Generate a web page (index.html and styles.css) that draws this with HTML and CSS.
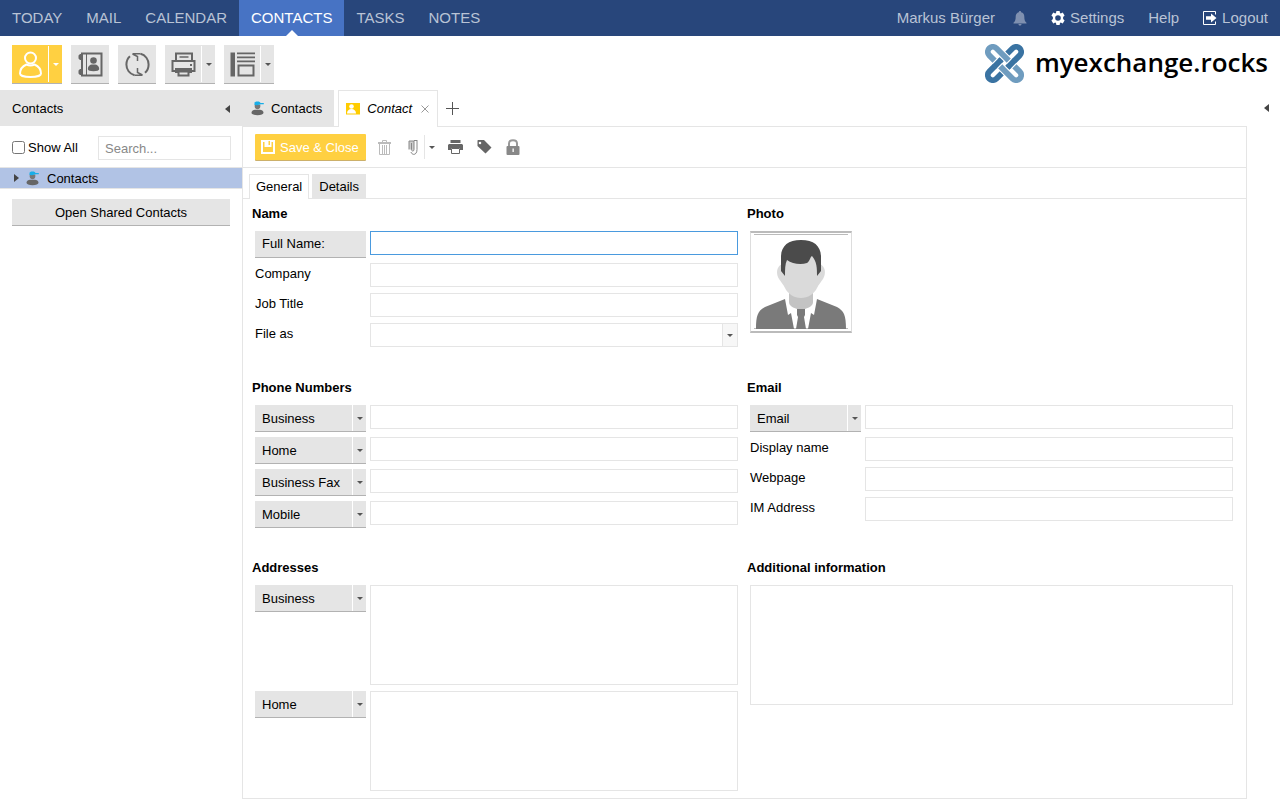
FILE: index.html
```html
<!DOCTYPE html>
<html lang="en">
<head>
  <meta charset="UTF-8" />
  <title>Contact - myexchange.rocks</title>
  <meta name="viewport" content="width=device-width, initial-scale=1.0"/>
  <link rel="stylesheet" href="styles.css">
</head>
<body>

  <header class="topbar">
    <nav class="main-nav">
      <a href="#today">TODAY</a>
      <a href="#mail">MAIL</a>
      <a href="#calendar">CALENDAR</a>
      <a href="#contacts" class="active">CONTACTS</a>
      <a href="#tasks">TASKS</a>
      <a href="#notes">NOTES</a>
    </nav>
    <nav class="user-nav">
      <span class="user-name">Markus Bürger</span>
      <a href="#reminders" class="bell" aria-label="Reminders">
        <svg width="14" height="15" viewBox="0 0 14 15"><path fill="#7f90b0" d="M7 0c.7 0 1.1.5 1.1 1.2C10.300 1.700 11.300 3.500 11.300 5.500c0 3.500.7 4.800 2.200 6.200v.8H.5v-.8C2 10.300 2.700 9 2.700 5.500c0-2 1-3.800 3.200-4.300C5.900.5 6.300 0 7 0zM5.500 13h3c0 1-.6 1.600-1.500 1.600S5.500 14 5.500 13z"/></svg>
      </a>
      <a href="#settings" class="with-icon">
        <svg width="14" height="14" viewBox="0 0 14 14"><path fill="#fff" fill-rule="evenodd" d="M5.400 0h3.200l.4 2 .8.400 1.900-.8 1.900 2.900-1.500 1.400v2.200l1.500 1.400-1.900 2.900-1.900-.8-.8.400-.4 2H5.400l-.4-2-.8-.4-1.900.8L.4 9.500l1.500-1.400V5.900L.4 4.500l1.900-2.900 1.900.8.8-.4zM7 4.200a2.800 2.800 0 1 0 0 5.600 2.800 2.800 0 0 0 0-5.600z"/></svg>
        Settings
      </a>
      <a href="#help">Help</a>
      <a href="#logout" class="with-icon">
        <svg width="14" height="14" viewBox="0 0 14 14"><path fill="none" stroke="#fff" d="M12.500 3.500v-3H.5v13h12v-3"/><path fill="#fff" d="M3 5.200h5V2.500L13.500 7 8 11.500V8.800H3z"/></svg>
        Logout
      </a>
    </nav>
  </header>

  <div class="toolbar">
    <button class="tool split primary" aria-label="New contact">
      <span class="tool-icon"><svg width="25" height="27" viewBox="0 0 25 27" fill="none" stroke="#fff" stroke-width="2"><circle cx="12.500" cy="7" r="5.500"/><path d="M8.500 13.500C4 15.500 2 19.500 2 22.500c0 2 4 3.500 10.500 3.500S23 24.500 23 22.500c0-3-2-7-6.500-9-2.500 1.300-5.500 1.300-8 0z"/></svg></span>
      <span class="caret"></span>
    </button>
    <button class="tool" aria-label="Address book">
      <span class="tool-icon"><svg width="25" height="25" viewBox="0 0 25 25"><path fill="none" stroke="#666" stroke-width="2" d="M4 2.500V1.500h19.500v22H4v-1M4 8v9"/><path stroke="#666" d="M8.500 1v23"/><path fill="#666" d="M2 2h3v6H2L.5 6.500v-3zM2 17h3v6H2L.5 21.500v-3z"/><circle cx="15.500" cy="8.500" r="3.300" fill="#666"/><path fill="#666" d="M9.800 17c0-3 2.400-4.500 4-4.500h3.400c1.600 0 4 1.500 4 4.500 0 1.600-2.500 2.200-5.700 2.200S9.800 18.600 9.800 17z"/></svg></span>
    </button>
    <button class="tool" aria-label="Refresh">
      <span class="tool-icon"><svg width="25" height="25" viewBox="0 0 25 25" fill="none" stroke="#666" stroke-width="2"><path d="M9.500 23.200C4.500 22 1.400 17.500 1.400 12.500c0-3.500 1.300-6.300 3.600-8.300"/><path d="M15.500 1.800c5 1.200 8.100 5.700 8.100 10.700 0 3.500-1.300 6.300-3.600 8.300"/><path stroke-width="1.500" d="M15.500 1.800H7.500M7.500 2l5 2.500V9M9.500 23.200h8M17.500 23l-5-2.500V16"/></svg></span>
    </button>
    <button class="tool split" aria-label="Print">
      <span class="tool-icon"><svg width="25" height="25" viewBox="0 0 25 25"><g fill="none" stroke="#666" stroke-width="2"><path d="M5 9V1.500h16V9M4 19H1.500V9h22v10H21"/></g><path stroke="#666" stroke-width="1.500" d="M8.500 5h9"/><path fill="#666" d="M4 16h17v5h-2.500v3.500h-12V21H4zM19 12h2v2h-2z"/><path fill="#e5e5e5" d="M8.500 20.500h8v2h-8z"/></svg></span>
      <span class="caret"></span>
    </button>
    <button class="tool split" aria-label="View">
      <span class="tool-icon"><svg width="25" height="25" viewBox="0 0 25 25"><path fill="#666" d="M.5.500h4.500v24H.5z"/><path stroke="#666" stroke-width="1.700" d="M7 1.400h18M7 5.400h18M7 9.400h18"/><path fill="none" stroke="#666" stroke-width="2" d="M8.500 13.500h15v10h-15z"/></svg></span>
      <span class="caret"></span>
    </button>

    <a href="#home" class="brand">
      <!-- two interlaced loops -->
      <svg width="39" height="39" viewBox="0 0 39 39" fill="none">
        <g transform="translate(19.500 19.500) rotate(45)" stroke-width="5.800">
          <rect x="-5" y="-21.500" width="10" height="43" rx="5" stroke="#3a73a2"/>
          <path stroke="#fff" stroke-width="8" d="M-9-5h8M1 5h8"/>
          <rect x="-21.500" y="-5" width="43" height="10" rx="5" stroke="#6f9cbf"/>
          <path stroke="#fff" stroke-width="8" d="M5-9v8M-5 1v8"/>
          <path stroke="#3a73a2" d="M5-9.500v9M-5 .5v9"/>
        </g>
      </svg>
      <span>myexchange.rocks</span>
    </a>
  </div>

  <div class="workspace">
    <aside class="sidebar">
      <div class="sidebar-head">
        <span>Contacts</span>
        <button class="collapse" aria-label="Collapse navigation"></button>
      </div>
      <div class="filter">
        <label><input type="checkbox"> <span>Show All</span></label>
        <input type="text" class="search" placeholder="Search..." aria-label="Search folders">
      </div>
      <a href="#folder" class="folder">
        <span class="expander"></span>
        <svg class="person" width="14" height="15" viewBox="0 0 14 15"><path fill="#666" d="M.5 11.800C.5 9.700 2.500 8.800 4 8.800h5c1.500 0 3.500.9 3.500 3 0 1.600-2.500 2.400-6 2.400s-6-.8-6-2.400z"/><path fill="#777" d="M3.700 3.500h5.600v2c0 1.800-1.300 2.700-2.800 2.700S3.700 7.300 3.700 5.500z"/><path fill="#18aee8" d="M3.500 4V2c0-1 1-1.600 3-1.600S9.300 1 9.500 2H12.800v1.300H9.500L6 4.200z"/></svg>
        <span>Contacts</span>
      </a>
      <button class="shared">Open Shared Contacts</button>
    </aside>

    <main class="content">
      <div class="tabs">
        <a href="#list" class="tab">
          <svg class="person" width="14" height="15" viewBox="0 0 14 15"><path fill="#666" d="M.5 11.800C.5 9.700 2.500 8.800 4 8.800h5c1.500 0 3.500.9 3.500 3 0 1.600-2.500 2.400-6 2.400s-6-.8-6-2.400z"/><path fill="#777" d="M3.700 3.500h5.600v2c0 1.800-1.300 2.700-2.800 2.700S3.700 7.300 3.700 5.500z"/><path fill="#18aee8" d="M3.500 4V2c0-1 1-1.600 3-1.600S9.300 1 9.500 2H12.800v1.300H9.500L6 4.200z"/></svg>
          Contacts
        </a>
        <div class="tab active">
          <svg width="14" height="12" viewBox="0 0 14 12"><path fill="#fc0" d="M0 0h14v11.500H0z"/><circle cx="5.500" cy="3.500" r="2.300" fill="#fff"/><path fill="#fff" d="M1 10.500c0-3 2-4.500 4.500-4.500S10 7.500 10 10.500z"/></svg>
          <em>Contact</em>
          <button class="close" aria-label="Close tab"><svg width="8" height="8" viewBox="0 0 8 8"><path stroke="#999" d="M.5.500l7 7M7.500.5l-7 7"/></svg></button>
        </div>
        <button class="add" aria-label="New tab"><svg width="13" height="13" viewBox="0 0 13 13"><path stroke="#555" d="M6.500 0v13M0 6.500h13"/></svg></button>
      </div>

      <form class="panel">
        <div class="actions">
          <button type="button" class="save">
            <svg width="14" height="14" viewBox="0 0 14 14"><path fill="none" stroke="#fff" stroke-width="2" d="M1 1h12v12H1z"/><path fill="#fff" d="M3.500 1h7v6h-7z"/><path fill="#ffd041" d="M7.500 1h1.500v4H7.500z"/></svg>
            <span>Save &amp; Close</span>
          </button>
          <button type="button" class="action trash" aria-label="Delete"><svg width="13" height="15" viewBox="0 0 13 15"><g fill="none" stroke="#bbb"><path stroke-width="2" d="M0 3h13"/><path d="M4.500 2V.5h4V2M1.500 4v10.500h10V4M4.500 5v9M6.500 5v9M8.500 5v9"/></g></svg></button>
          <button type="button" class="action" aria-label="Attach"><svg width="10" height="15" viewBox="0 0 10 15"><path fill="#ccc" d="M1 1h5v10L1 9z"/><path fill="none" stroke="#888" d="M3.500 3v6.500c0 2 2.500 2 2.500 0V1H1v8.500M9 1v8.500c0 6-5 6-6 2.500M6 .5h3.500"/></svg></button>
          <button type="button" class="action menu" aria-label="Attach menu"><span class="arrow"></span></button>
          <button type="button" class="action" aria-label="Print"><svg width="15" height="14" viewBox="0 0 15 14"><path fill="#666" d="M2.500 0h10v3h-10zM1 4h13l1 1v5h-3V8H3v2H0V5z"/><path fill="none" stroke="#666" d="M3.500 8.500h8v5h-8z"/></svg></button>
          <button type="button" class="action" aria-label="Categories"><svg width="15" height="14" viewBox="0 0 15 14"><path fill="#666" fill-rule="evenodd" d="M1 0h6l7.500 7.500-6 6L.5 6V.5zM3 1.700a1.300 1.300 0 1 0 0 2.600 1.300 1.300 0 0 0 0-2.600z"/></svg></button>
          <button type="button" class="action" aria-label="Private"><svg width="14" height="16" viewBox="0 0 14 16"><path fill="none" stroke="#999" stroke-width="2" d="M3 8V4.500C3 0 11 0 11 4.500V8"/><rect x=".5" y="7" width="13" height="9" rx="1" fill="#888"/><path fill="#fff" d="M6.500 9.500h1.300v3.500H6.500z"/></svg></button>
        </div>

        <div class="subtabs">
          <a href="#general" class="subtab active">General</a>
          <a href="#details" class="subtab">Details</a>
        </div>

        <div class="sections">
          <section>
            <h2>Name</h2>
            <div class="rows">
              <div class="row">
                <button type="button" class="name-button">Full Name:</button>
                <input type="text" class="focused" aria-label="Full Name">
              </div>
              <div class="row">
                <label for="company">Company</label>
                <input type="text" id="company">
              </div>
              <div class="row">
                <label for="jobTitle">Job Title</label>
                <input type="text" id="jobTitle">
              </div>
              <div class="row">
                <label for="fileAs">File as</label>
                <div class="combo"><select id="fileAs"><option></option></select><span class="arrow"></span></div>
              </div>
            </div>
          </section>

          <section>
            <h2>Photo</h2>
            <div class="rows">
              <button type="button" class="photo" aria-label="Contact photo">
                <svg width="94" height="96" viewBox="0 0 94 96">
                  <path stroke="#bbb" d="M0 .5h94M0 94.500h94"/>
                  <path fill="#c3c3c3" d="M35 54h24v14c0 4-5 6-8 7h-8c-3-1-8-3-8-7z"/>
                  <path fill="#dadada" d="M28 30c-6 3-6 10-3 15 2 3 4 5 6 9 3 6 9 10 16 10s13-4 16-10c2-4 4-6 6-9 3-5 3-12-3-15V20H28z"/>
                  <path fill="#4b4b4b" d="M27 37V23C27 12 34 6 47 6s20 6 20 17v14l-4 5c0-8 0-14-5-20-2 1-2 5-5 7-6 2-15 1-20-3-2 4-2 9-2 16z"/>
                  <path fill="#7a7a7a" d="M2 95c0-14 2-18 9-22l20-8 3 16 3-2 3 16zM92 95c0-14-2-18-9-22l-20-8-3 16-3-2-3 16zM43 75h8v6l-1 2 2 12H42l2-12-1-2z"/>
                </svg>
              </button>
            </div>
          </section>

          <section>
            <h2>Phone Numbers</h2>
            <div class="rows">
              <div class="row">
                <div class="picker"><select aria-label="Phone type 1"><option>Business</option></select><span class="arrow"></span></div>
                <input type="text" aria-label="Business phone">
              </div>
              <div class="row">
                <div class="picker"><select aria-label="Phone type 2"><option>Home</option></select><span class="arrow"></span></div>
                <input type="text" aria-label="Home phone">
              </div>
              <div class="row">
                <div class="picker"><select aria-label="Phone type 3"><option>Business Fax</option></select><span class="arrow"></span></div>
                <input type="text" aria-label="Business fax">
              </div>
              <div class="row">
                <div class="picker"><select aria-label="Phone type 4"><option>Mobile</option></select><span class="arrow"></span></div>
                <input type="text" aria-label="Mobile phone">
              </div>
            </div>
          </section>

          <section>
            <h2>Email</h2>
            <div class="rows">
              <div class="row">
                <div class="picker"><select aria-label="Email type"><option>Email</option></select><span class="arrow"></span></div>
                <input type="text" aria-label="Email">
              </div>
              <div class="row">
                <label for="displayName">Display name</label>
                <input type="text" id="displayName">
              </div>
              <div class="row">
                <label for="webpage">Webpage</label>
                <input type="text" id="webpage">
              </div>
              <div class="row">
                <label for="imAddress">IM Address</label>
                <input type="text" id="imAddress">
              </div>
            </div>
          </section>

          <section>
            <h2>Addresses</h2>
            <div class="rows">
              <div class="row">
                <div class="picker"><select aria-label="Address type 1"><option>Business</option></select><span class="arrow"></span></div>
                <textarea class="address" aria-label="Business address"></textarea>
              </div>
              <div class="row">
                <div class="picker"><select aria-label="Address type 2"><option>Home</option></select><span class="arrow"></span></div>
                <textarea class="address" aria-label="Home address"></textarea>
              </div>
            </div>
          </section>

          <section>
            <h2 id="infoTitle">Additional information</h2>
            <div class="rows">
              <textarea class="info" aria-labelledby="infoTitle"></textarea>
            </div>
          </section>
        </div>
      </form>
    </main>

    <div class="right-rail">
      <button class="collapse" aria-label="Show widgets"></button>
    </div>
  </div>

</body>
</html>
```

FILE: styles.css
```css
* {
  box-sizing: border-box;
}
body {
  margin: 0;
  background: #fff;
  color: #000;
  font-family: "Liberation Sans", Arial, sans-serif;
  font-size: 13px;
  line-height: 18px;
}
a {
  color: inherit;
  text-decoration: none;
}
button, input, select, textarea {
  font: inherit;
  color: inherit;
  margin: 0;
  padding: 0;
  border: 0;
  border-radius: 0;
  background: none;
}
button {
  cursor: pointer;
}
svg {
  display: block;
  flex-shrink: 0;
}

/* top bar */
.topbar {
  display: flex;
  justify-content: space-between;
  height: 36px;
  background: #28467b;
  color: #b9c3d5;
  font-size: 15px;
  line-height: 36px;
}
.main-nav {
  display: flex;
}
.main-nav a {
  padding: 0 12px;
}
.main-nav .active {
  position: relative;
  background: #4773c4;
  color: #fff;
}
.main-nav .active::after {
  content: "";
  position: absolute;
  left: 50%;
  bottom: 0;
  margin-left: -6px;
  border: 6px solid transparent;
  border-top: 0;
  border-bottom-color: #fff;
}
.user-nav {
  display: flex;
  align-items: center;
  gap: 24px;
  padding-right: 12px;
}
.user-name {
  margin-right: -6px;
}
.with-icon {
  display: flex;
  align-items: center;
  gap: 5px;
}

/* main toolbar */
.toolbar {
  display: flex;
  align-items: center;
  gap: 9px;
  height: 54px;
  padding: 2px 12px 0;
}
.tool {
  display: flex;
  align-items: center;
  width: 38px;
  height: 38px;
  background: #e5e5e5;
  box-shadow: 0 1px #b2b2b2;
}
.tool.split {
  width: 50px;
}
.tool.primary {
  background: #ffd041;
}
.tool-icon {
  display: flex;
  justify-content: center;
  width: 38px;
}
.split .tool-icon {
  width: 36px;
}
.caret {
  display: flex;
  align-items: center;
  justify-content: center;
  width: 14px;
  height: 36px;
  border-left: 1px solid #fff;
}
.caret::after, .arrow::after {
  content: "";
  border: 3px solid transparent;
  border-top-color: #555;
  border-bottom: 0;
}
.primary .caret::after {
  border-top-color: #fff;
}
.brand {
  display: flex;
  align-items: center;
  gap: 11px;
  height: 50px;
  margin-left: auto;
  padding-bottom: 2px;
  font-family: "Open Sans", "Noto Sans", sans-serif;
  font-size: 26px;
  font-weight: 600;
  line-height: 36px;
}
.brand span {
  padding-bottom: 3px;
}

/* workspace */
.workspace {
  display: flex;
}
.sidebar {
  width: 242px;
}
.sidebar-head {
  display: flex;
  align-items: center;
  justify-content: space-between;
  height: 36px;
  padding: 1px 10px 0 12px;
  background: #e5e5e5;
}
.collapse::after {
  content: "";
  display: block;
  border: 4px solid transparent;
  border-left: 0;
  border-right: 5px solid #444;
}
.sidebar-head .collapse {
  padding-right: 2px;
}
.sidebar-head span, .filter span, .folder span:last-child {
  padding-top: 1px;
}
.filter {
  display: flex;
  align-items: center;
  justify-content: space-between;
  height: 42px;
  padding: 2px 11px 0 12px;
  border-bottom: 1px solid #e5e5e5;
}
.filter label {
  display: flex;
  align-items: center;
  gap: 3px;
}
.filter .search {
  width: 133px;
}
input[type="text"], textarea, .combo {
  height: 24px;
  padding: 1px 6px 0;
  border: 1px solid #e5e5e5;
  background: #fff;
}
input::placeholder {
  color: #888;
}
.folder {
  display: flex;
  align-items: center;
  height: 21px;
  padding-left: 14px;
  border-bottom: 1px solid #e5e5e5;
  background: #b1c3e5;
}
.expander {
  margin-right: 7px;
  border: 4px solid transparent;
  border-left: 5px solid #444;
  border-right: 0;
}
.folder .person {
  margin-right: 7px;
}
.shared {
  display: block;
  width: 218px;
  height: 26px;
  margin: 10px 0 0 12px;
  padding-top: 1px;
  background: #e5e5e5;
  box-shadow: 0 1px #b2b2b2;
}

.content {
  flex: 1;
  min-width: 0;
}
.tabs {
  display: flex;
  height: 36px;
}
.tab {
  display: flex;
  align-items: center;
  gap: 6px;
  height: 36px;
  padding: 1px 12px 0 9px;
  background: #e5e5e5;
}
.tab.active {
  gap: 7px;
  height: 37px;
  margin-left: 4px;
  padding: 0 8px 0 7px;
  border: 1px solid #e5e5e5;
  border-bottom: 0;
  background: #fff;
  z-index: 1;
}
.close {
  margin-left: 2px;
}
.add {
  padding: 0 8px;
}
.panel {
  border: 1px solid #e5e5e5;
}
.right-rail {
  width: 33px;
  padding: 14px 11px 0 0;
}
.right-rail .collapse {
  margin-left: auto;
  display: block;
}

/* contact form */
.actions {
  display: flex;
  align-items: center;
  gap: 14px;
  height: 41px;
  padding-left: 12px;
  border-bottom: 1px solid #e5e5e5;
}
.save {
  display: flex;
  align-items: center;
  gap: 5px;
  width: 111px;
  height: 26px;
  padding-left: 6px;
  border-radius: 1px;
  background: #ffd041;
  box-shadow: 0 1px #ccb06a;
  color: #fff;
}
.save span {
  padding-top: 1px;
}
.trash {
  margin: 0 3px 0 -2px;
}
.menu {
  display: flex;
  align-items: center;
  height: 24px;
  margin-left: -8px;
  margin-right: -1px;
  padding-left: 4px;
  border-left: 1px solid #e5e5e5;
}
.subtabs {
  display: flex;
  gap: 3px;
  height: 31px;
  padding: 6px 0 0 6px;
  border-bottom: 1px solid #e5e5e5;
}
.subtab {
  height: 24px;
  padding: 0 7px;
  background: #e5e5e5;
  line-height: 26px;
}
.subtab.active {
  height: 25px;
  padding: 0 6px;
  border: 1px solid #e5e5e5;
  border-bottom: 0;
  background: #fff;
  line-height: 24px;
}
.sections {
  display: grid;
  grid-template-columns: 1fr 1fr;
  gap: 32px 9px;
  padding: 6px 13px 7px 9px;
}
h2 {
  margin: 0 0 8px;
  font-size: 13px;
}
.rows {
  display: flex;
  flex-direction: column;
  gap: 6px;
  margin-left: 3px;
}
.row {
  display: flex;
  align-items: flex-start;
  gap: 4px;
}
.row label {
  width: 111px;
  line-height: 22px;
}
.row input, .row textarea, .combo {
  flex: 1;
  min-width: 0;
}
.row .focused {
  border-color: #4a9ade;
  outline: 0;
}
.name-button, .picker {
  position: relative;
  width: 111px;
  height: 26px;
  background: #e5e5e5;
  box-shadow: 0 1px #b2b2b2;
  text-align: left;
}
.name-button {
  padding-left: 7px;
}
.combo {
  position: relative;
}
.row .combo {
  padding: 0;
}
.picker select, .combo select {
  appearance: none;
  display: block;
  width: 100%;
  height: 100%;
  padding: 1px 16px 0 7px;
}
.arrow {
  display: flex;
  align-items: center;
  justify-content: center;
}
.picker .arrow, .combo .arrow {
  position: absolute;
  top: 0;
  right: 0;
  bottom: 0;
  width: 14px;
  border-left: 1px solid #fff;
  pointer-events: none;
}
.combo .arrow {
  width: 15px;
  border-left-color: #e5e5e5;
  background: #f7f7f7;
}
textarea {
  display: block;
  resize: none;
}
.row .address {
  height: 100px;
}
.info {
  width: 100%;
}
.rows .info {
  height: 120px;
}
.photo {
  display: flex;
  align-items: center;
  justify-content: center;
  width: 102px;
  height: 102px;
  border: 1px solid #ddd;
  border-width: 2px 1px;
  border-color: #bbb #ddd;
}
```
